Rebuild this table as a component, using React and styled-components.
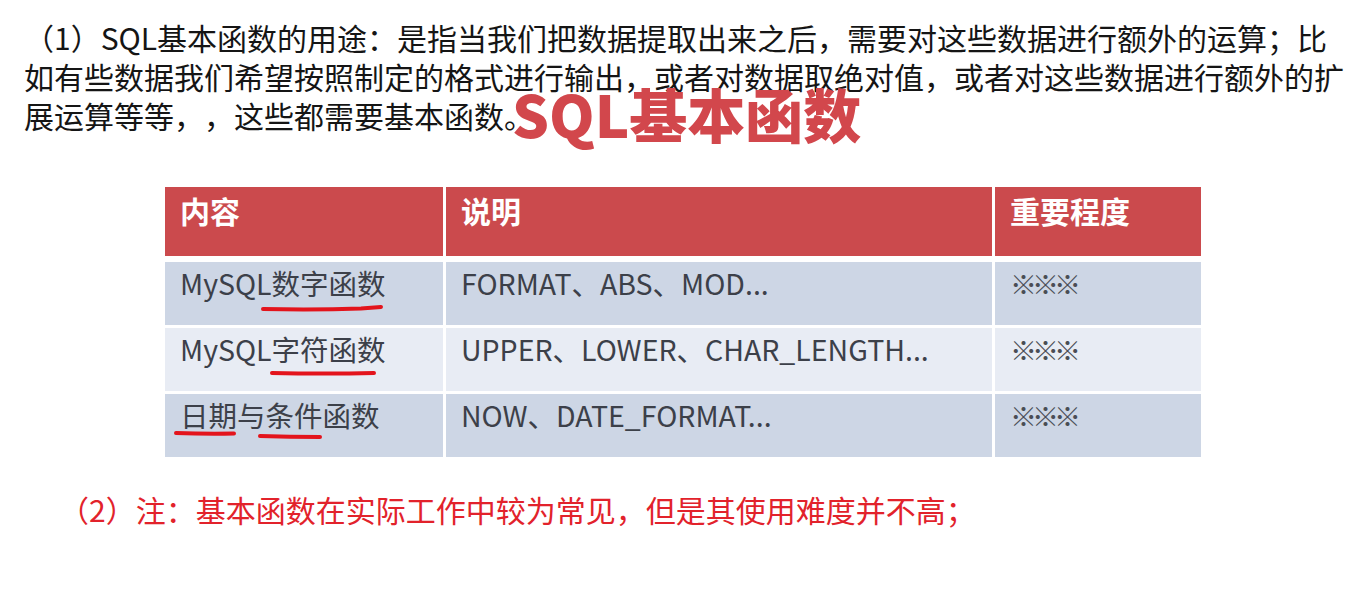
import React from 'react';
import styled, { createGlobalStyle } from 'styled-components';

const GlobalStyle = createGlobalStyle`
  html, body {
    margin: 0;
    padding: 0;
    background: #ffffff;
  }
  body {
    font-family: "Noto Sans CJK SC", "Noto Sans", sans-serif;
    text-spacing-trim: space-all;
  }
`;

const Slide = styled.div`
  width: 1357px;
  height: 592px;
  overflow: hidden;
  background: #ffffff;
  display: flex;
  flex-direction: column;
`;

const Intro = styled.section`
  position: relative;
  padding: 18px 0 0 24px;
`;

const Paragraph = styled.p`
  margin: 0;
  font-size: 30px;
  line-height: 39px;
  color: #151515;
  white-space: nowrap;
`;

// slide title sits on top of the paragraph's last line
const Title = styled.h1`
  position: absolute;
  left: 512px;
  top: 84px;
  margin: 0;
  font-size: 58px;
  line-height: 58px;
  font-weight: 900;
  color: #d2474c;
`;

const Table = styled.div`
  margin: 52px 0 0 165px;
  width: 1036px;
  display: flex;
  flex-direction: column;
  gap: 3px;
`;

const Row = styled.div`
  display: grid;
  grid-template-columns: 278px 546px 206px;
  column-gap: 3px;
  height: ${p => (p.$head ? '69px' : '63px')};
  margin-bottom: ${p => (p.$head ? '3px' : '0')};
`;

const Cell = styled.div`
  position: relative;
  padding: ${p => (p.$head ? '6px' : '4px')} 14px 0 15px;
  background: ${p => (p.$head ? '#cb4a4d' : p.$light ? '#e8ecf4' : '#cdd6e5')};
  color: ${p => (p.$head ? '#ffffff' : '#3c4049')};
  font-size: ${p => (p.$head ? '30px' : '28.5px')};
  line-height: 34px;
  font-weight: ${p => (p.$head ? 700 : 400)};
  white-space: nowrap;
`;

const Stars = styled.span`
  font-size: 27px;
  letter-spacing: -5px;
  color: #4a4d55;
`;

const Ink = styled.svg`
  position: absolute;
  left: 0;
  top: 0;
  width: 100%;
  height: 100%;
  pointer-events: none;
  overflow: visible;
`;

const Note = styled.p`
  margin: 33px 0 0 59px;
  font-size: 30px;
  line-height: 39px;
  color: #e2222b;
  white-space: nowrap;
`;

const Marks = ({ strokes }) => (
  <Ink>
    {strokes.map((d, i) => (
      <path key={i} d={d} fill="none" stroke="#e3141c" strokeWidth="4" strokeLinecap="round" />
    ))}
  </Ink>
);

const rows = [
  {
    name: 'MySQL数字函数',
    desc: 'FORMAT、ABS、MOD...',
    marks: ['M98 47 Q150 48 196 46.5 L216 45'],
  },
  {
    name: 'MySQL字符函数',
    desc: 'UPPER、LOWER、CHAR_LENGTH...',
    light: true,
    marks: ['M107 45 Q160 46 209 45'],
  },
  {
    name: '日期与条件函数',
    desc: 'NOW、DATE_FORMAT...',
    marks: ['M11 39 Q40 40 69 39.5', 'M95 42 Q125 43 155 43'],
  },
];

const App = () => {
  return (
    <Slide>
      <GlobalStyle />
      <Intro>
        <Paragraph>
          （1）SQL基本函数的用途：是指当我们把数据提取出来之后，需要对这些数据进行额外的运算；比
          <br />
          如有些数据我们希望按照制定的格式进行输出，或者对数据取绝对值，或者对这些数据进行额外的扩
          <br />
          展运算等等，，这些都需要基本函数。
        </Paragraph>
        <Title>SQL基本函数</Title>
      </Intro>

      <Table>
        <Row $head>
          <Cell $head>内容</Cell>
          <Cell $head>说明</Cell>
          <Cell $head>重要程度</Cell>
        </Row>
        {rows.map(r => (
          <Row key={r.name}>
            <Cell $light={r.light}>
              {r.name}
              <Marks strokes={r.marks} />
            </Cell>
            <Cell $light={r.light}>{r.desc}</Cell>
            <Cell $light={r.light}>
              <Stars>※※※</Stars>
            </Cell>
          </Row>
        ))}
      </Table>

      <Note>（2）注：基本函数在实际工作中较为常见，但是其使用难度并不高；</Note>
    </Slide>
  );
};

export default App;
